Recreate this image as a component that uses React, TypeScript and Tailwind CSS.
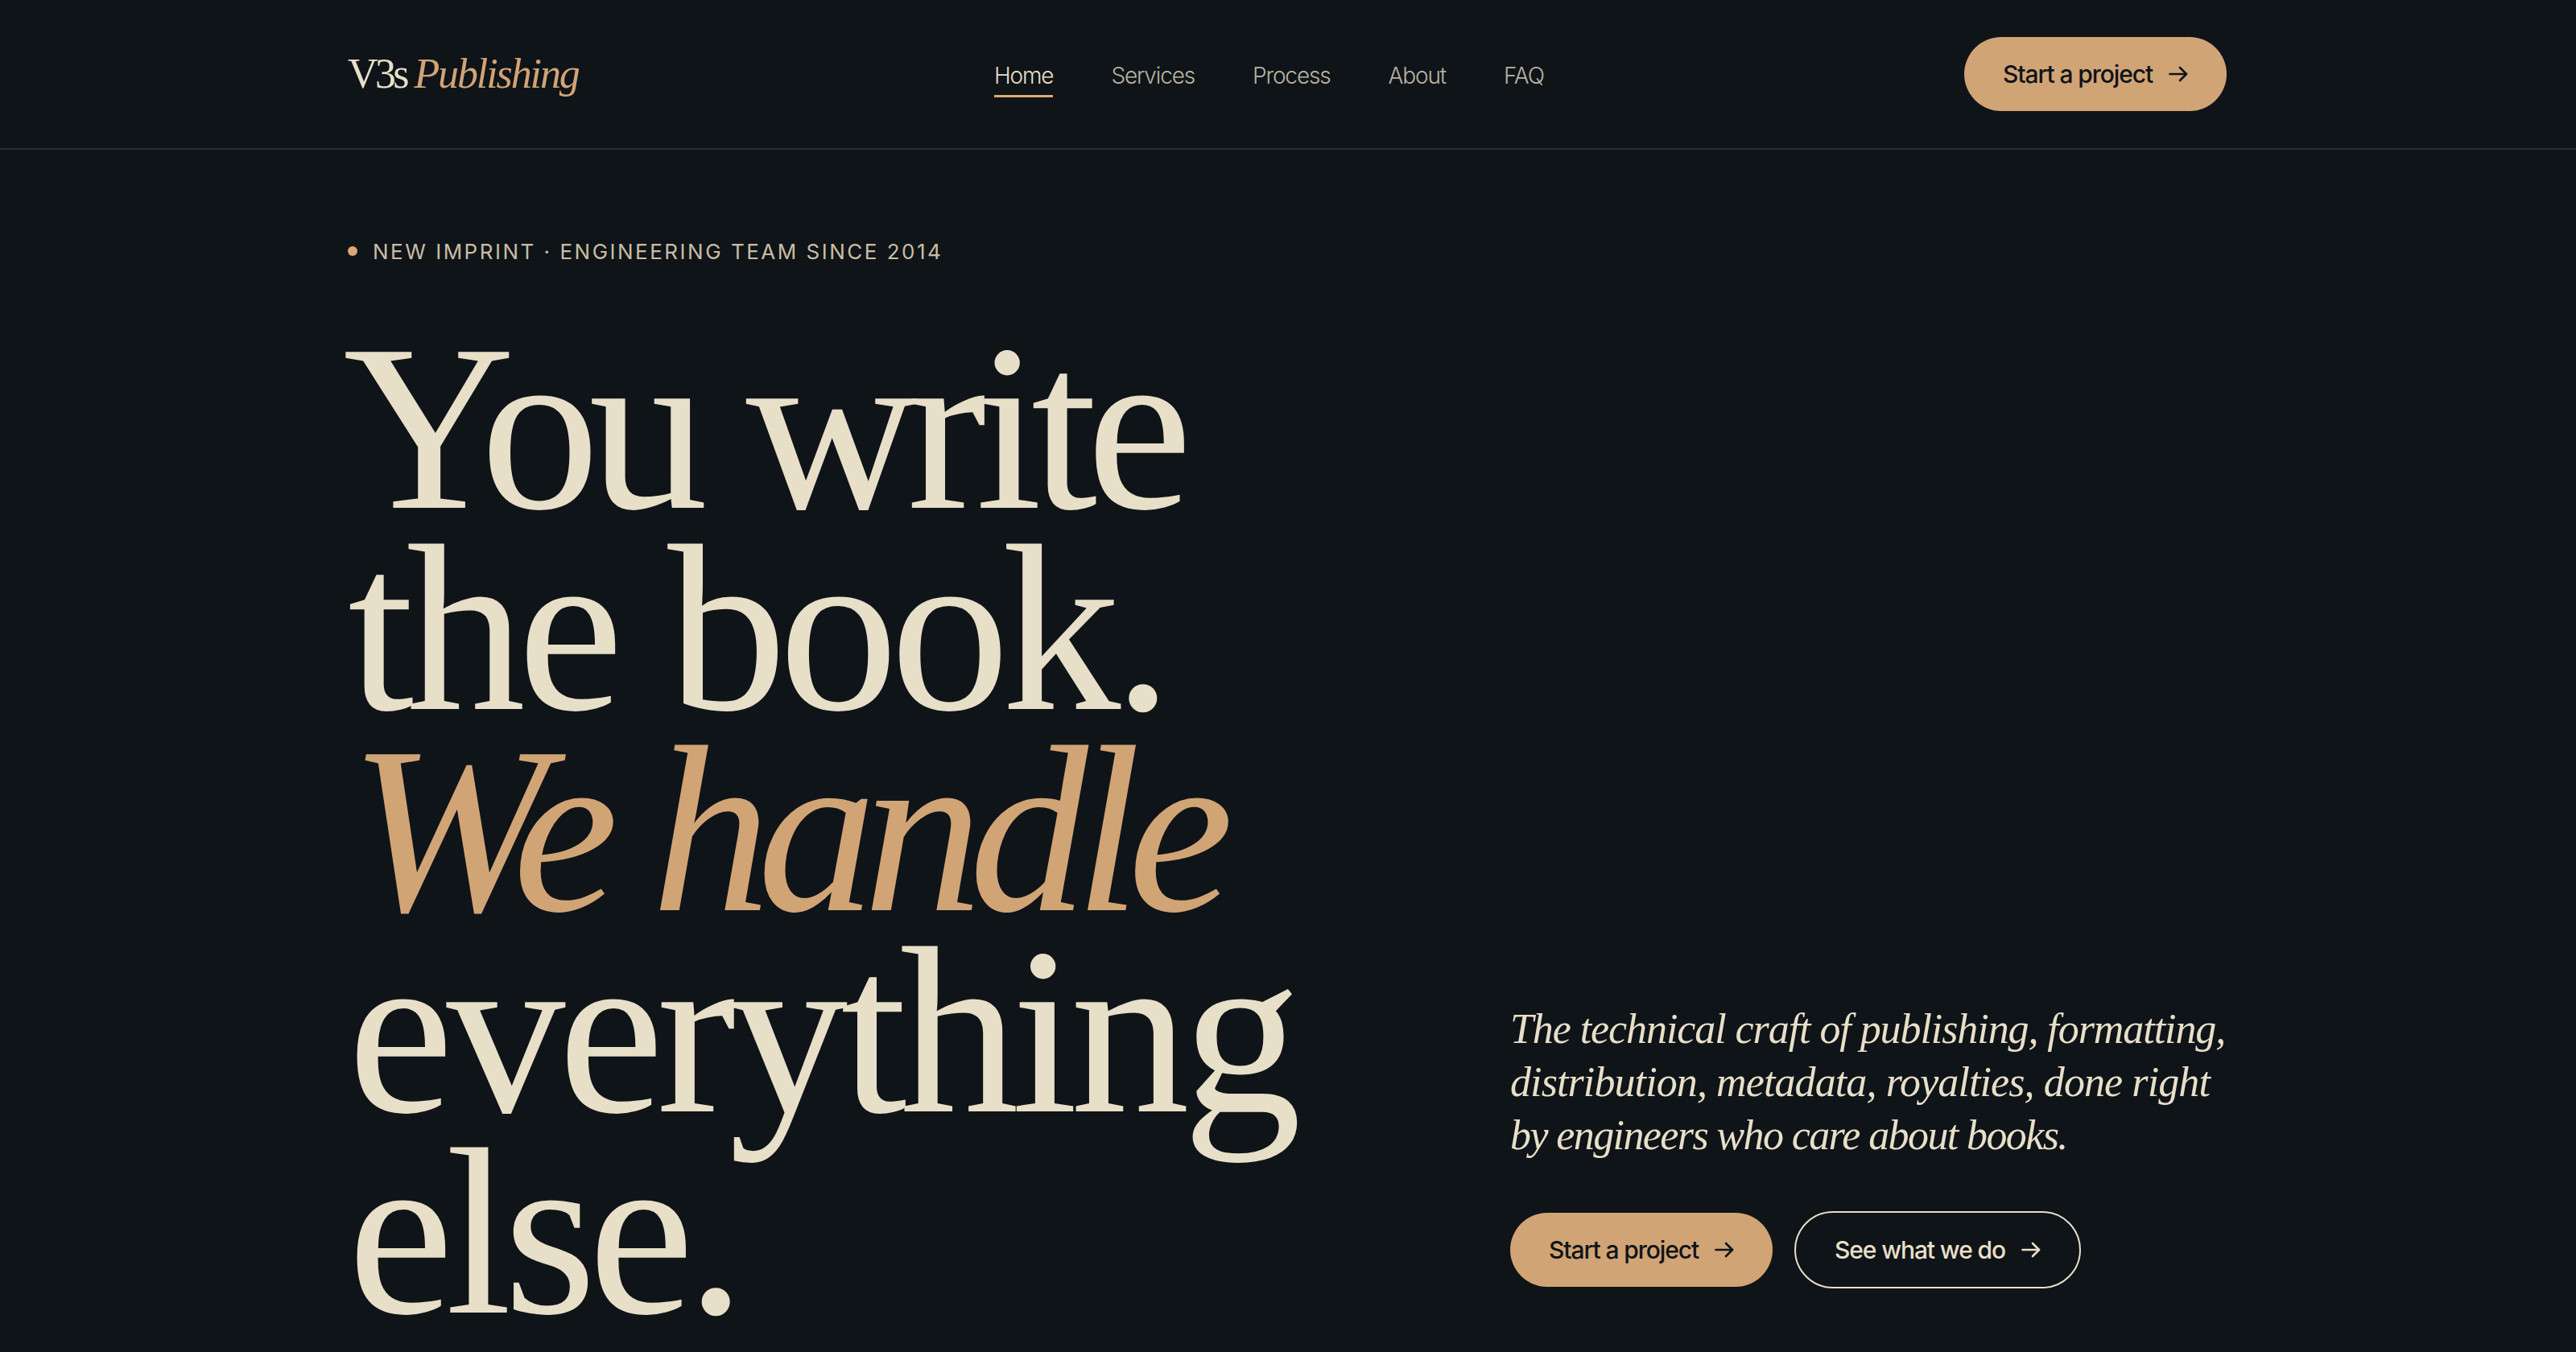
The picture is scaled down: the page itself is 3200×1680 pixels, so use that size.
const navLinks = ["Services", "Process", "About", "FAQ"];

const Arrow = () => (
  <svg width="24" height="20" viewBox="0 0 24 20" fill="none" stroke="currentColor" strokeWidth="2.6" strokeLinecap="round" strokeLinejoin="round">
    <path d="M1.5 10H22" />
    <path d="M14 2l8 8-8 8" />
  </svg>
);

const App = () => {
  return (
    <div className="h-[1680px] overflow-hidden bg-[#0f1418] font-['Inter',sans-serif] text-[#e8dfc9]">
      {/* Header */}
      <header className="border-b-2 border-[#2a2e35]">
        <div className="ml-[432px] flex h-[184px] w-[2334px] items-center justify-between">
          <a className="font-['Liberation_Serif',serif] text-[52px] leading-none">
            <span className="tracking-[-3.6px]">V3s </span>
            <em className="tracking-[-2.1px] text-[#d1a476]">Publishing</em>
          </a>
          <nav className="mr-[6px] flex items-center gap-[72px] text-[28px] leading-[36px] font-light tracking-[-1.15px]">
            <a className="border-b-[3px] border-[#dba875] pt-[12px] pb-[6px] text-[#e8dfc9]">Home</a>
            {navLinks.map((link) => (
              <a key={link} className="border-b-[3px] border-transparent pt-[12px] pb-[6px] text-[#b9b3a5]">
                {link}
              </a>
            ))}
          </nav>
          <a className="flex h-[92px] w-[326px] items-center justify-center gap-[20px] rounded-full bg-[#d1a476] text-[30px] font-medium tracking-[-1.1px] text-[#0f1418]">
            Start a project
            <Arrow />
          </a>
        </div>
      </header>

      <main className="ml-[432px] w-[2334px]">
        {/* Eyebrow */}
        <div className="mt-[99px] flex h-[54px] items-center gap-[19px] text-[26px] tracking-[2.5px] text-[#c9bda5]">
          <span className="h-[12px] w-[12px] rounded-full bg-[#dba875]" />
          NEW IMPRINT · ENGINEERING TEAM SINCE 2014
        </div>

        <div className="mt-[67px] grid grid-cols-[1444px_1fr] items-end">
          <h1 className="-ml-[6px] font-['Liberation_Serif',serif] text-[296px] leading-[250px] font-normal">
            <span className="block tracking-[-13.4px]">You write</span>
            <span className="block pl-[6px] tracking-[-9.6px]">the book.</span>
            <em className="block pl-[8px] tracking-[-16.5px] text-[#d1a476]">We handle</em>
            <span className="block pl-[6px] tracking-[-9px]">everything</span>
            <span className="block pl-[6px] tracking-[-10px]">else.</span>
          </h1>

          {/* Intro + actions */}
          <div className="pb-[55px]">
            <p className="font-['Liberation_Serif',serif] text-[52px] leading-[66px] whitespace-nowrap italic">
              <span className="block tracking-[-1.07px]">The technical craft of publishing, formatting,</span>
              <span className="block tracking-[-0.9px]">distribution, metadata, royalties, done right</span>
              <span className="block tracking-[-1.6px]">by engineers who care about books.</span>
            </p>
            <div className="mt-[61px] flex items-center gap-[27px]">
              <a className="flex h-[92px] w-[326px] items-center justify-center gap-[20px] rounded-full bg-[#d1a476] text-[30px] font-medium tracking-[-1.1px] text-[#0f1418]">
                Start a project
                <Arrow />
              </a>
              <a className="flex h-[96px] w-[356px] items-center justify-center gap-[20px] rounded-full border-2 border-[#e8dfc9] text-[30px] font-medium tracking-[-1.1px] text-[#e8dfc9]">
                See what we do
                <Arrow />
              </a>
            </div>
          </div>
        </div>
      </main>
    </div>
  );
};

export default App;
